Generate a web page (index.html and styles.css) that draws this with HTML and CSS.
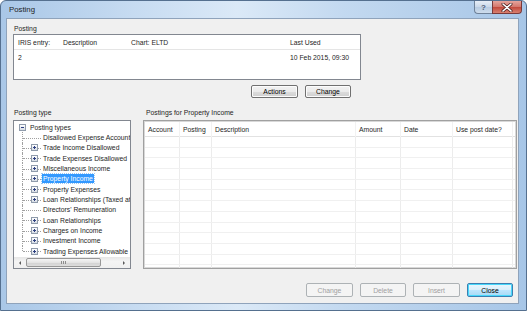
FILE: index.html
```html
<!DOCTYPE html>
<html lang="en">
<head>
  <meta charset="UTF-8" />
  <title>Posting</title>
  <link rel="stylesheet" href="styles.css">
</head>

<body>
<div class="window">
  <div class="titlebar">
    <span class="title">Posting</span>
    <div class="caption-btns">
      <span class="cap help">?</span>
      <span class="cap close">
        <svg width="12" height="9" viewBox="0 0 12 9">
          <path d="M2 1 L10 8 M10 1 L2 8" stroke="#4a2020" stroke-width="3" stroke-linecap="round"/>
          <path d="M2 1 L10 8 M10 1 L2 8" stroke="#ffffff" stroke-width="1.6" stroke-linecap="round"/>
        </svg>
      </span>
    </div>
  </div>

  <div class="client">
    <!-- Posting -->
    <section class="posting">
      <div class="label">Posting</div>
      <div class="listview">
        <div class="lv-row lv-head">
          <span>IRIS entry:</span><span>Description</span><span>Chart: ELTD</span><span>Last Used</span>
        </div>
        <div class="lv-row">
          <span>2</span><span></span><span></span><span>10 Feb 2015, 09:30</span>
        </div>
      </div>
      <div class="btn-row">
        <button class="btn w47">Actions</button>
        <button class="btn w46">Change</button>
      </div>
    </section>

    <div class="panels">
      <!-- Posting type tree -->
      <div class="tree-panel">
        <div class="label">Posting type</div>
        <div class="tree">
          <div class="tree-items">
            <div class="node root"><span class="exp minus"></span><span class="txt">Posting types</span></div>
            <div class="node"><span class="branch"></span><span class="txt">Disallowed Expense Account</span></div>
            <div class="node"><span class="branch"><span class="exp"></span></span><span class="txt">Trade Income Disallowed</span></div>
            <div class="node"><span class="branch"><span class="exp"></span></span><span class="txt">Trade Expenses Disallowed</span></div>
            <div class="node"><span class="branch"><span class="exp"></span></span><span class="txt">Miscellaneous Income</span></div>
            <div class="node"><span class="branch"><span class="exp"></span></span><span class="txt selected">Property Income</span></div>
            <div class="node"><span class="branch"><span class="exp"></span></span><span class="txt">Property Expenses</span></div>
            <div class="node"><span class="branch"><span class="exp"></span></span><span class="txt">Loan Relationships (Taxed at</span></div>
            <div class="node"><span class="branch"></span><span class="txt">Directors' Remuneration</span></div>
            <div class="node"><span class="branch"><span class="exp"></span></span><span class="txt">Loan Relationships</span></div>
            <div class="node"><span class="branch"><span class="exp"></span></span><span class="txt">Charges on Income</span></div>
            <div class="node"><span class="branch"><span class="exp"></span></span><span class="txt">Investment Income</span></div>
            <div class="node last"><span class="branch"><span class="exp"></span></span><span class="txt">Trading Expenses Allowable</span></div>
          </div>
          <div class="hscroll">
            <span class="sb-arrow left"></span>
            <div class="sb-track"><span class="sb-thumb"></span></div>
            <span class="sb-arrow right"></span>
          </div>
        </div>
      </div>

      <!-- Postings grid -->
      <div class="grid-panel">
        <div class="label">Postings for Property Income</div>
        <div class="grid">
          <div class="g-row g-head">
            <span>Account</span><span>Posting</span><span>Description</span><span>Amount</span><span>Date</span><span>Use post date?</span>
          </div>
          <div class="g-row"><span></span><span></span><span></span><span></span><span></span><span></span></div>
          <div class="g-row"><span></span><span></span><span></span><span></span><span></span><span></span></div>
          <div class="g-row"><span></span><span></span><span></span><span></span><span></span><span></span></div>
          <div class="g-row"><span></span><span></span><span></span><span></span><span></span><span></span></div>
          <div class="g-row"><span></span><span></span><span></span><span></span><span></span><span></span></div>
          <div class="g-row"><span></span><span></span><span></span><span></span><span></span><span></span></div>
          <div class="g-row"><span></span><span></span><span></span><span></span><span></span><span></span></div>
          <div class="g-row"><span></span><span></span><span></span><span></span><span></span><span></span></div>
          <div class="g-row"><span></span><span></span><span></span><span></span><span></span><span></span></div>
          <div class="g-row"><span></span><span></span><span></span><span></span><span></span><span></span></div>
          <div class="g-row"><span></span><span></span><span></span><span></span><span></span><span></span></div>
          <div class="g-row"><span></span><span></span><span></span><span></span><span></span><span></span></div>
          <div class="g-row"><span></span><span></span><span></span><span></span><span></span><span></span></div>
        </div>
      </div>
    </div>

    <div class="footer">
      <button class="btn w47" disabled>Change</button>
      <button class="btn w46" disabled>Delete</button>
      <button class="btn w47" disabled>Insert</button>
      <button class="btn w46 default">Close</button>
    </div>
  </div>
</div>
</body>
</html>
```

FILE: styles.css
```css
* {
  box-sizing: border-box;
}

body {
  margin: 0;
  width: 527px;
  height: 311px;
  overflow: hidden;
  font-family: "Liberation Sans", Arial, sans-serif;
  font-size: 6.8px;
  color: #1e1e1e;
  background: #fff;
}

.window {
  width: 527px;
  height: 311px;
  padding: 0 7px 6px 5px;
  border: 1px solid #55708f;
  border-radius: 6px 6px 0 0;
  background: linear-gradient(to right, #a9c7e7 0%, #c6dbf1 25%, #dbe9f7 45%, #c3d9f0 65%, #a7c6e7 100%);
  display: flex;
  flex-direction: column;
}

.titlebar {
  height: 17px;
  display: flex;
  justify-content: space-between;
  align-items: flex-start;
}

.title {
  font-size: 7.8px;
  line-height: 17px;
  padding-left: 3px;
}

.caption-btns {
  display: flex;
  margin-right: -3px;
}

.cap {
  height: 13px;
  display: flex;
  align-items: center;
  justify-content: center;
  border: 1px solid #6f8299;
  border-top: none;
}

.cap.help {
  width: 18px;
  border-radius: 0 0 0 4px;
  border-right: none;
  background: linear-gradient(#e7eef7, #c9d8e9 50%, #b7cbe1 51%, #cddcec);
  color: #50627a;
  font-size: 8px;
  font-weight: bold;
}

.cap.close {
  width: 30px;
  border-radius: 0 0 4px 0;
  border-color: #7a3a3a;
  background: linear-gradient(#e5a59d, #d4766b 50%, #c2483b 51%, #d8806f);
}

.client {
  flex: 1;
  background: #f0f0f0;
  border: 1px solid #8fa3bb;
  padding: 5px 0 0 6px;
}

.label {
  height: 10px;
  line-height: 10px;
  padding-left: 1px;
}

/* Posting section */
.posting {
  width: 348px;
}

.listview {
  height: 46px;
  border: 1px solid #828790;
  background: #fff;
}

.lv-row {
  display: grid;
  grid-template-columns: 45px 68px 159px 1fr;
  height: 13px;
  line-height: 13px;
}

.lv-row span {
  padding-left: 4px;
  white-space: nowrap;
}

.lv-head {
  height: 15px;
  line-height: 15px;
  border-bottom: 1px solid #e5e5e5;
  margin-bottom: 1px;
}

.btn-row {
  display: flex;
  justify-content: flex-end;
  gap: 7px;
  padding-right: 10px;
  margin-top: 5px;
}

.btn {
  height: 13px;
  padding: 0;
  font-family: inherit;
  font-size: 6.8px;
  color: #000;
  border: 1px solid #707070;
  border-radius: 2px;
  background: linear-gradient(#f2f2f2, #ebebeb 50%, #dddddd 51%, #cfcfcf);
  box-shadow: inset 0 0 0 1px #fcfcfc;
}

.w47 { width: 47px; }
.w46 { width: 46px; }

.btn:disabled {
  color: #a0a0a0;
  border-color: #adb2b5;
  background: #f4f4f4;
  box-shadow: none;
}

.btn.default {
  border-color: #3c7fb1;
  background: linear-gradient(#eaf6fd, #d9f0fc 50%, #bee6fd 51%, #a7d9f5);
  box-shadow: inset 0 0 0 1px #48d8fb;
}

/* Panels */
.panels {
  display: flex;
  gap: 12px;
  margin-top: 10px;
}

.tree-panel {
  width: 118px;
}

.grid-panel {
  width: 374px;
}

.grid-panel .label {
  padding-left: 3px;
}

.tree {
  margin-top: 2px;
  height: 149px;
  border: 1px solid #828790;
  background: #fff;
  display: flex;
  flex-direction: column;
}

.tree-items {
  flex: 1;
  overflow: hidden;
  padding-top: 1px;
}

.node {
  height: 10.35px;
  display: flex;
  align-items: center;
  white-space: nowrap;
}

.node.root {
  padding-left: 5px;
}

.root .exp {
  margin-right: 3px;
}

.branch {
  position: relative;
  width: 20px;
  height: 100%;
  margin-left: 8px;
  flex: none;
  display: flex;
  align-items: center;
}

.branch::before {
  content: "";
  position: absolute;
  left: 0;
  top: 0;
  bottom: 0;
  border-left: 1px dotted #a0a0a0;
}

.node.last .branch::before {
  bottom: 50%;
}

.branch::after {
  content: "";
  position: absolute;
  left: 1px;
  width: 18px;
  top: 50%;
  border-top: 1px dotted #a0a0a0;
}

.branch .exp {
  margin-left: 9px;
  z-index: 1;
}

.exp {
  position: relative;
  width: 7px;
  height: 7px;
  flex: none;
  border: 1px solid #8f9bab;
  background: linear-gradient(#ffffff, #d6dce4);
}

.exp::before {
  content: "";
  position: absolute;
  left: 1px;
  right: 1px;
  top: 2px;
  height: 1px;
  background: #2d3f80;
}

.exp::after {
  content: "";
  position: absolute;
  top: 1px;
  bottom: 1px;
  left: 2px;
  width: 1px;
  background: #2d3f80;
}

.exp.minus::after {
  display: none;
}

.txt {
  padding: 0 1px;
  line-height: 9px;
}

.txt.selected {
  background: #3399ff;
  color: #fff;
  outline: 1px dotted #9cc7f2;
}

.hscroll {
  height: 11px;
  display: flex;
  background: linear-gradient(#e6e6e6, #f4f4f4 40%, #f0f0f0);
}

.sb-arrow {
  width: 12px;
  display: flex;
  align-items: center;
  justify-content: center;
}

.sb-arrow::before {
  content: "";
  border-top: 2px solid transparent;
  border-bottom: 2px solid transparent;
}

.sb-arrow.left::before {
  border-right: 2px solid #5a5a5a;
}

.sb-arrow.right::before {
  border-left: 2px solid #5a5a5a;
}

.sb-track {
  flex: 1;
  padding: 1px 0;
}

.sb-thumb {
  display: block;
  width: 75px;
  height: 100%;
  border: 1px solid #979797;
  border-radius: 2px;
  background: linear-gradient(#f5f5f5, #e4e4e4 50%, #d3d3d3 51%, #dcdcdc);
  position: relative;
}

.sb-thumb::after {
  content: "";
  position: absolute;
  left: 34px;
  top: 2px;
  width: 5px;
  height: 3px;
  background: repeating-linear-gradient(to right, #8c8c8c 0 1px, transparent 1px 2px);
}

/* Grid */
.grid {
  margin-top: 2px;
  height: 149px;
  border: 1px solid #a0a0a0;
  box-shadow: inset 0 0 0 1px #d8d8d8;
  background: #fff;
  padding: 1px;
  overflow: hidden;
}

.g-row {
  display: grid;
  grid-template-columns: 35px 32px 144px 45px 52px 60px;
  height: 10.7px;
  border-bottom: 1px solid #f0f0f0;
}

.g-row span {
  border-right: 1px solid #ececec;
  padding-left: 3px;
  white-space: nowrap;
}

.g-head {
  height: 15px;
  line-height: 15px;
  border-bottom: 1px solid #e2e2e2;
}

.g-head span {
  border-right-color: #f2f2f2;
}

/* Footer buttons */
.footer {
  display: flex;
  justify-content: flex-end;
  gap: 7px;
  margin-top: 14px;
  padding-right: 5px;
}

.footer .btn {
  height: 14px;
}
```
